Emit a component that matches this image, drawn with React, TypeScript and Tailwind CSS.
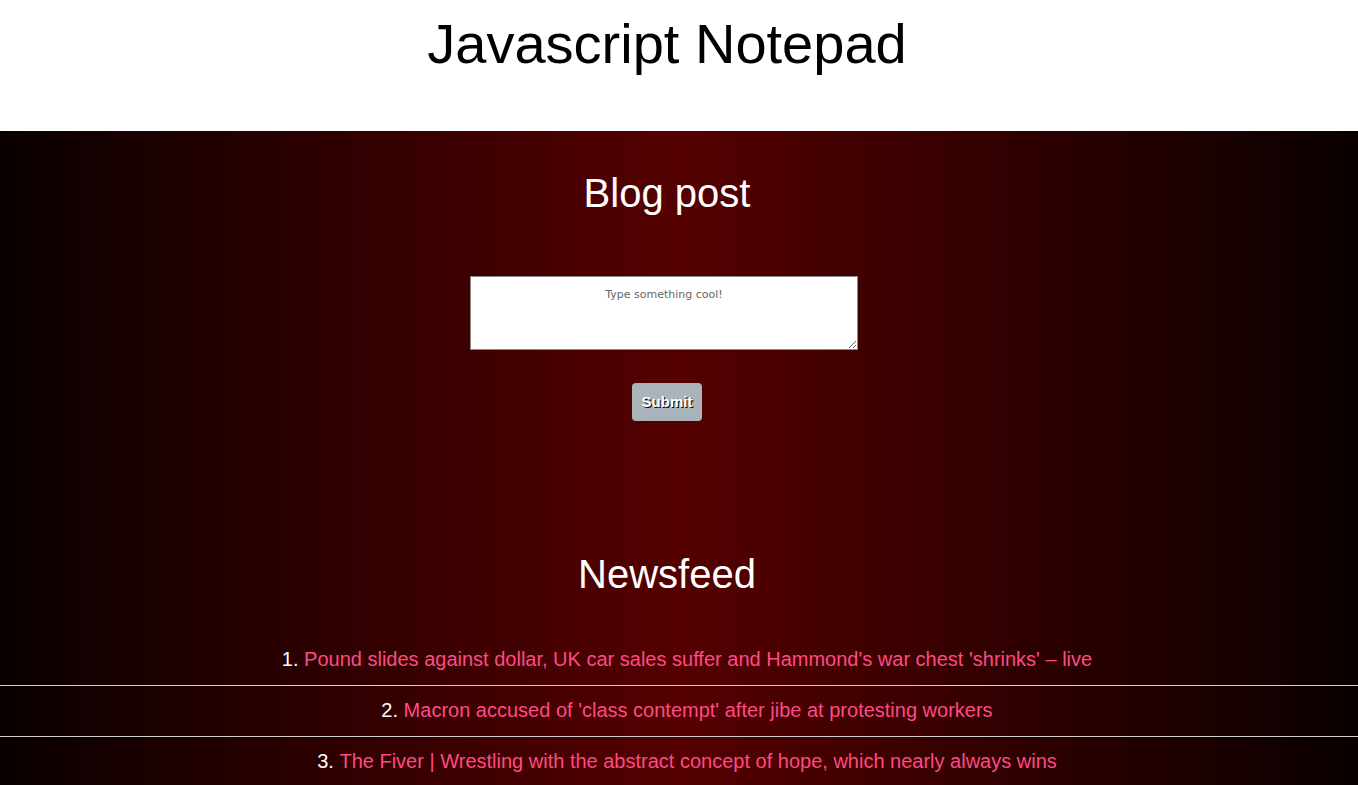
import React from 'react';

const headlines = [
  "Pound slides against dollar, UK car sales suffer and Hammond's war chest 'shrinks' – live",
  "Macron accused of 'class contempt' after jibe at protesting workers",
  'The Fiver | Wrestling with the abstract concept of hope, which nearly always wins',
];

export default function App() {
  return (
    <div className="min-h-screen font-['Liberation_Sans',Arial,sans-serif]">
      {/* Header */}
      <header className="h-[131px] bg-white flex justify-center pr-[24px]">
        <h1 className="mt-[12px] text-[56px] leading-[64px] font-light text-black">Javascript Notepad</h1>
      </header>

      {/* Main */}
      <main className="bg-[linear-gradient(to_right,#0a0000_0%,#550000_50%,#0a0000_100%)] text-white">
        <section className="flex flex-col items-center pt-[39px] pr-[24px]">
          <h2 className="text-[40px] leading-[46px]">Blog post</h2>
          <textarea
            placeholder="Type something cool!"
            className="mt-[60px] mr-[6px] w-[388px] h-[74px] bg-white border border-[#8a8a8a] text-center text-[11px] pt-[10px] text-black placeholder:text-[#666] font-['DejaVu_Sans',sans-serif]"
          />
          <button className="mt-[33px] w-[70px] h-[38px] rounded-[4px] bg-[#a9b4ba] text-white font-bold text-[15px] [text-shadow:1px_1px_0_#000]">
            Submit
          </button>
        </section>

        <section className="mt-[130px]">
          <h2 className="text-center text-[40px] leading-[46px] pr-[24px]">Newsfeed</h2>
          <ol className="mt-[38px] list-inside list-decimal text-[20px]">
            {headlines.map((h, i) => (
              <li
                key={i}
                className={`h-[51px] pt-[9px] pl-[40px] pr-[24px] text-center ${i < headlines.length - 1 ? 'border-b border-[#cfcfcf]' : ''}`}
              >
                <a href="#" className="text-[#ff4a86]">{h}</a>
              </li>
            ))}
          </ol>
        </section>
      </main>
    </div>
  );
}
